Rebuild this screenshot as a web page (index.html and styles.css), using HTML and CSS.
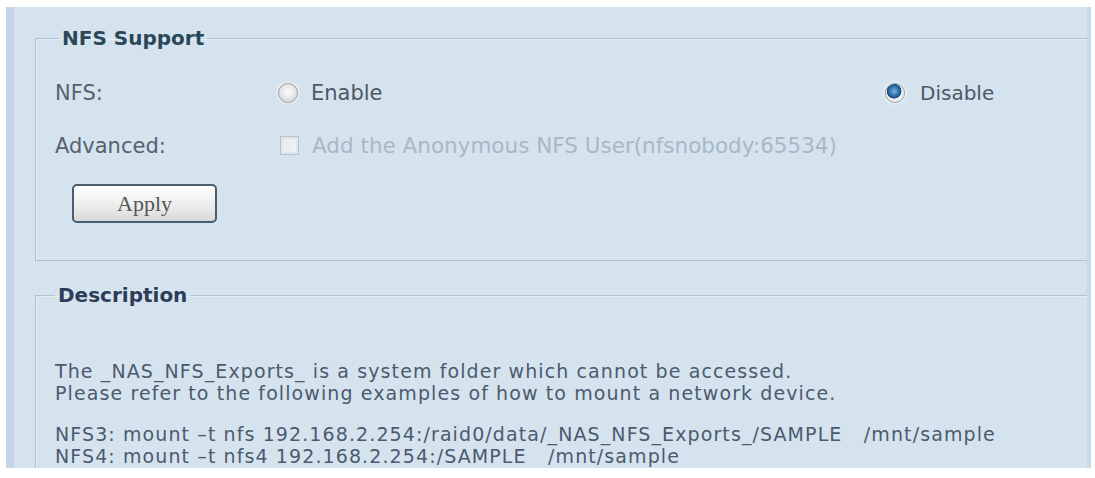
FILE: index.html
```html
<!DOCTYPE html>
<html lang="en">
<head>
  <meta charset="UTF-8">
  <title>NFS</title>
  <link rel="stylesheet" href="styles.css">
</head>
<body>
  <div class="panel">
    <fieldset class="group">
      <legend>NFS Support</legend>
      <div class="row">
        <span class="label">NFS:</span>
        <label class="opt enable"><input type="radio" name="nfs" value="1"> Enable</label>
        <label class="opt disable"><input type="radio" name="nfs" value="0" checked> Disable</label>
      </div>
      <div class="row">
        <span class="label">Advanced:</span>
        <label class="opt off"><input type="checkbox" disabled> Add the Anonymous NFS User(nfsnobody:65534)</label>
      </div>
      <button class="apply">Apply</button>
    </fieldset>

    <fieldset class="group desc">
      <legend>Description</legend>
      <p>The _NAS_NFS_Exports_ is a system folder which cannot be accessed.<br>
      Please refer to the following examples of how to mount a network device.</p>
      <p>NFS3: mount &ndash;t nfs 192.168.2.254:/raid0/data/_NAS_NFS_Exports_/SAMPLE &nbsp;&nbsp;/mnt/sample<br>
      NFS4: mount &ndash;t nfs4 192.168.2.254:/SAMPLE &nbsp;&nbsp;/mnt/sample</p>
    </fieldset>
  </div>
</body>
</html>
```

FILE: styles.css
```css
/* NAS admin panel */
body {
  margin: 0;
  background: #fff;
  font-family: 'DejaVu Sans', Verdana, sans-serif;
  color: #56616d;
}

.panel {
  margin: 7px 4px 0 6px;
  height: 461px;
  overflow: hidden;
  background: #d5e3ef;
  border-left: 8px solid #c4d5e5;
  border-right: 4px solid #c9d9e7;
  padding-left: 21px;
}

.group {
  margin: 19px -20px 0 0;
  padding: 16px 0 37px 19px;
  border: 1px solid #b2c2cf;
  box-shadow: inset 1px 1px 0 #e4edf5;
}

.group legend {
  padding: 0 3px;
  margin-left: 4px;
  line-height: 24px;
  font-size: 20px;
  font-weight: bold;
  color: #2b4858;
}

.row {
  display: flex;
  align-items: center;
  height: 53px;
  font-size: 21px;
}

.label {
  width: 223px;
}

.opt {
  display: flex;
  align-items: center;
  gap: 13px;
  color: #4d5866;
}

.enable {
  width: 607px;
}

.disable {
  gap: 15px;
  font-size: 20px;
}

.off {
  font-size: 21.5px;
  color: #a9b8c5;
}

input[type=radio] {
  appearance: none;
  margin: 0;
  width: 20px;
  height: 20px;
  border-radius: 50%;
  border: 1px solid #9aa3aa;
  background: radial-gradient(circle at 50% 40%, #fafafa 0, #e2e4e6 55%, #c9cdd0 100%);
  box-shadow: 0 0 0 2px #e3ebf2;
}

input[type=radio]:checked {
  background: radial-gradient(circle at 45% 40%, #7fb4e0 0, #2a6aa8 35%, #1c4b7d 48%, #f2f2f2 52%, #dfe2e5 100%);
}

input[type=checkbox] {
  appearance: none;
  margin: 0 0 0 2px;
  width: 19px;
  height: 19px;
  border: 1px solid #b7c3cc;
  background: linear-gradient(135deg, #e4e9ee, #f3f5f7);
  box-shadow: inset 0 0 0 2px #dfe6ec;
}

.apply {
  display: block;
  margin: 12px 0 0 17px;
  width: 145px;
  height: 39px;
  border: 2px solid #4a5d6c;
  border-radius: 5px;
  background: linear-gradient(#ffffff, #ebebeb 60%, #d8d8d8);
  font-family: 'Liberation Serif', 'Times New Roman', serif;
  font-size: 22px;
  color: #555;
  padding: 0;
}

.desc {
  margin-top: 22px;
  padding-top: 53px;
}

.desc legend {
  margin-left: 0;
  color: #2d3d58;
}

.desc p {
  margin: 0 0 19px;
  font-size: 19px;
  letter-spacing: 1.1px;
  line-height: 22px;
  color: #4c5a6e;
}
```
